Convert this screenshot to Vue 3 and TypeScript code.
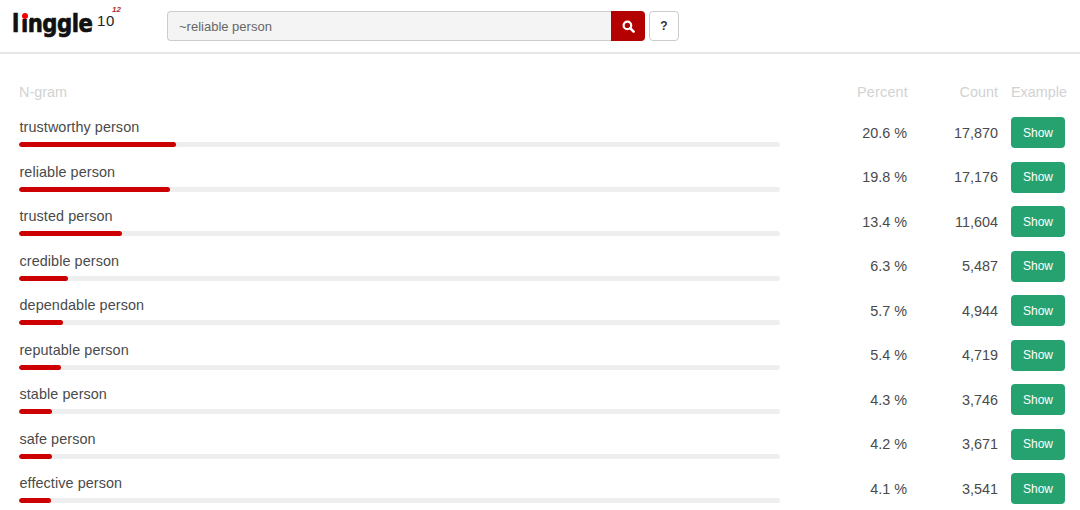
<script setup lang="ts">
interface Row { text: string; pct: number; count: string }
const rows: Row[] = [
  { text: 'trustworthy person', pct: 20.6, count: '17,870' },
  { text: 'reliable person', pct: 19.8, count: '17,176' },
  { text: 'trusted person', pct: 13.4, count: '11,604' },
  { text: 'credible person', pct: 6.3, count: '5,487' },
  { text: 'dependable person', pct: 5.7, count: '4,944' },
  { text: 'reputable person', pct: 5.4, count: '4,719' },
  { text: 'stable person', pct: 4.3, count: '3,746' },
  { text: 'safe person', pct: 4.2, count: '3,671' },
  { text: 'effective person', pct: 4.1, count: '3,541' }
]
</script>

<template>
  <div class="page">
    <header class="topbar">
      <div class="logo">
        <span class="word"><span class="first">l</span>inggle</span>
        <i class="mask"></i>
        <i class="dot"></i>
        <span class="ten">10</span>
        <span class="exp">12</span>
      </div>
      <div class="search">
        <div class="input">~reliable person</div>
        <button class="go" aria-label="Search">
          <svg width="13" height="13" viewBox="0 0 13 13">
            <circle cx="5.4" cy="5.4" r="3.8" fill="none" stroke="#fff" stroke-width="2.2" />
            <path d="M8.2 8.2 L11.6 11.6" stroke="#fff" stroke-width="2.6" stroke-linecap="round" />
          </svg>
        </button>
      </div>
      <button class="help">?</button>
    </header>

    <main class="table">
      <div class="line head">
        <div>N-gram</div>
        <div class="num">Percent</div>
        <div class="num">Count</div>
        <div class="ex">Example</div>
      </div>
      <div v-for="r in rows" :key="r.text" class="line row">
        <div class="gram">
          <div class="label">{{ r.text }}</div>
          <div class="track"><div class="fill" :style="{ width: 'calc(' + r.pct + '% + 0.7px)' }"></div></div>
        </div>
        <div class="num val">{{ r.pct.toFixed(1) }} %</div>
        <div class="num">{{ r.count }}</div>
        <div class="ex"><button class="show">Show</button></div>
      </div>
    </main>
  </div>
</template>

<style>
html, body { margin: 0; background: #fff; }
</style>

<style scoped>
.page {
  width: 1080px;
  height: 510px;
  overflow: hidden;
  font-family: "Liberation Sans", Arial, sans-serif;
  font-size: 14.4px;
  color: #4a4a4a;
}
.topbar {
  height: 52px;
  border-bottom: 2px solid #e6e6e6;
  display: flex;
  align-items: flex-start;
  box-sizing: content-box;
}
.logo {
  position: relative;
  width: 154px;
  height: 52px;
  margin-left: 13px;
  flex: none;
}
.word {
  position: absolute;
  left: -1px;
  top: 8px;
  font-family: "DejaVu Sans", sans-serif;
  font-weight: 700;
  font-size: 25px;
  line-height: 32px;
  letter-spacing: -0.6px;
  white-space: nowrap;
  color: #111;
  -webkit-text-stroke: 0.7px #111;
  transform: scaleX(0.85);
  transform-origin: left center;
}
.first {
  margin-right: 2.5px;
}
.mask {
  position: absolute;
  left: 7px;
  top: 12px;
  width: 10px;
  height: 6.5px;
  background: #fff;
}
.dot {
  position: absolute;
  left: 9px;
  top: 12.5px;
  width: 6px;
  height: 6px;
  border-radius: 50%;
  background: #f00000;
}
.ten {
  position: absolute;
  left: 84px;
  top: 15px;
  font-size: 15px;
  line-height: 12px;
  letter-spacing: 0.6px;
  color: #222;
}
.exp {
  position: absolute;
  left: 99px;
  top: 6px;
  font-size: 8px;
  line-height: 8px;
  font-style: italic;
  font-weight: 700;
  color: #b03030;
}
.search {
  display: flex;
  margin-top: 11px;
  width: 478px;
  height: 30px;
}
.input {
  flex: 1;
  box-sizing: border-box;
  background: #f4f4f4;
  border: 1px solid #ccc;
  border-right: none;
  border-radius: 4px 0 0 4px;
  padding-left: 11px;
  font-size: 13px;
  line-height: 30px;
  color: #666;
}
.go {
  width: 34px;
  padding: 0;
  border: none;
  background: #b30000;
  border-radius: 0 4px 4px 0;
  display: flex;
  align-items: center;
  justify-content: center;
}
.help {
  margin: 11px 0 0 4px;
  width: 30px;
  height: 30px;
  padding: 0;
  background: #fff;
  border: 1px solid #ccc;
  border-radius: 4px;
  font-family: "Liberation Sans", Arial, sans-serif;
  font-weight: 700;
  font-size: 12px;
  color: #333;
}
.table {
  padding: 20px 0 0 19px;
}
.line {
  display: grid;
  grid-template-columns: 761px 128px 90px 69px;
  align-items: center;
}
.head {
  height: 36.25px;
  color: #d2d2d2;
}
.head > div:nth-child(2) {
  letter-spacing: 0.2px;
}
.row {
  height: 44.5px;
}
.num {
  text-align: right;
}
.val {
  padding-right: 1px;
}
.ex {
  padding-left: 13px;
}
.label {
  line-height: 18px;
  letter-spacing: 0.08px;
  padding-left: 0.5px;
}
.track {
  margin-top: 6px;
  height: 5px;
  background: #eee;
  border-radius: 3px;
  overflow: hidden;
}
.fill {
  height: 100%;
  background: #cc0000;
  border-radius: 3px;
}
.show {
  display: block;
  width: 54px;
  height: 31px;
  padding: 0;
  border: none;
  border-radius: 4px;
  background: #26a270;
  color: #fff;
  font-family: "Liberation Sans", Arial, sans-serif;
  font-size: 12px;
}
</style>
